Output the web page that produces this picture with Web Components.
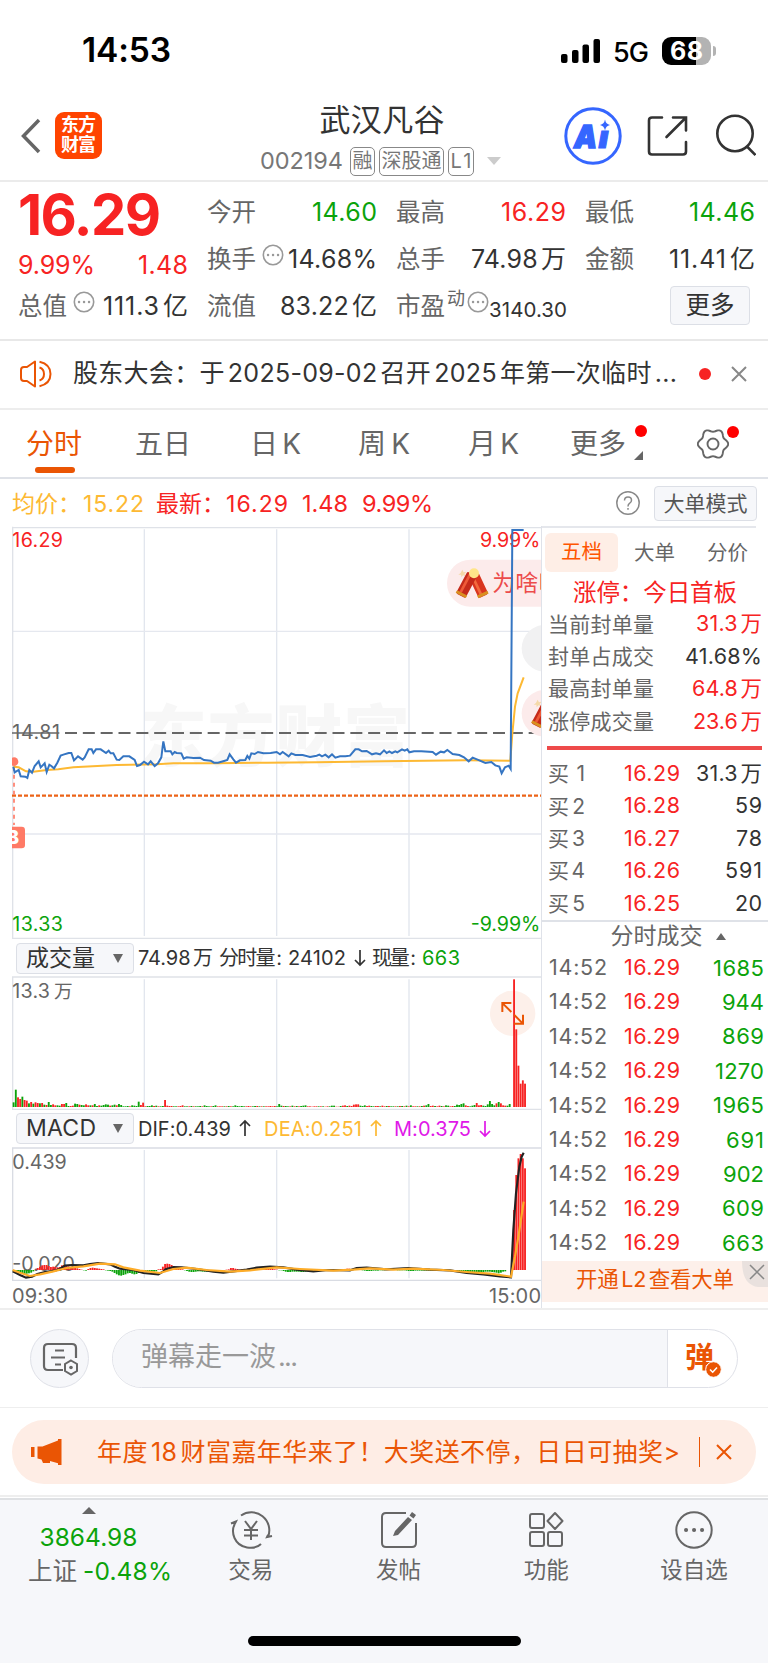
<!DOCTYPE html>
<html lang="zh-CN">
<head>
<meta charset="UTF-8">
<meta name="viewport" content="width=device-width, initial-scale=1.0">
<title>武汉凡谷 002194</title>
<style>
    body {
        margin: 0;
        width: 768px;
        background: #fff;
        color: #333;
        font-family: Inter, "Noto Sans CJK SC", sans-serif;
        text-autospace: normal;
        --red: #f72323;
        --green: #0ba30b;
        --brand: #ea5504;
        --grey: #666;
        --line: #dfe2e8;
        --soft: #f6f7fa;
    }
    .market {
        display: flex;
        height: 782px;
        border-bottom: 2px solid #eee;
    }
</style>
</head>
<body>
    <status-bar></status-bar>
    <stock-header></stock-header>
    <quote-panel></quote-panel>
    <notice-bar><fit-text w="604">股东大会：于2025-09-02召开2025年第一次临时...</fit-text></notice-bar>
    <period-tabs></period-tabs>
    <price-summary></price-summary>
    <main class="market">
        <stock-chart></stock-chart>
        <order-book></order-book>
    </main>
    <comment-bar></comment-bar>
    <promo-banner><fit-text w="583">年度18财富嘉年华来了！大奖送不停，日日可抽奖&gt;</fit-text></promo-banner>
    <bottom-nav></bottom-nav>

<script>
class StatusBar extends HTMLElement {
    constructor() {
        super();
        this.attachShadow({ mode: "open" });
        this.shadowRoot.innerHTML = `
            <style>
                :host {
                    display: flex;
                    align-items: center;
                    box-sizing: border-box;
                    height: 102px;
                    padding: 0 52px 0 82px;
                    color: #000;
                }
                .time { font-size: 33.500px; font-weight: 600; margin-right: auto; }
                .net { font-size: 27px; font-weight: 500; margin: 2px 13px 0 13px; }
                .battery {
                    display: flex;
                    align-items: center;
                    justify-content: center;
                    width: 49px;
                    height: 28px;
                    border-radius: 9px;
                    background: linear-gradient(90deg, #000 34px, #b3b3b3 34px);
                    color: #fff;
                    font-size: 25px;
                    font-weight: 700;
                }
                .nub { width: 3px; height: 10px; margin-left: 2px; border-radius: 0 3px 3px 0; background: #b3b3b3; }
            </style>
            <fit-text class="time" w="89">14:53</fit-text>
            <svg width="39" height="24" viewBox="0 0 39 24">
                <rect x="0" y="15" width="6.500" height="9" rx="2"/>
                <rect x="11" y="11" width="6.500" height="13" rx="2"/>
                <rect x="21.500" y="5.500" width="6.500" height="18.500" rx="2"/>
                <rect x="32.500" y="0" width="6.500" height="24" rx="2"/>
            </svg>
            <fit-text class="net" w="36">5G</fit-text>
            <div class="battery"><fit-text w="33">68</fit-text></div>
            <div class="nub"></div>
        `;
    }
}

class StockHeader extends HTMLElement {
    constructor() {
        super();
        this.attachShadow({ mode: "open" });
        this.shadowRoot.innerHTML = `
            <style>
                :host {
                    display: flex;
                    align-items: center;
                    box-sizing: border-box;
                    height: 80px;
                    padding: 0 12px 0 20px;
                    border-bottom: 2px solid #ebebeb;
                }
                svg { flex: none; margin-top: -10px; }
                .logo {
                    display: flex;
                    flex-direction: column;
                    justify-content: center;
                    align-items: center;
                    gap: 2px;
                    width: 47px;
                    height: 47px;
                    margin: -12px 158px 0 14px;
                    border-radius: 9px;
                    background: #ff4400;
                    color: #fff;
                    font-size: 18px;
                    font-weight: 700;
                }
                .name {
                    display: flex;
                    flex-direction: column;
                    align-items: center;
                    width: 244px;
                    margin: -3px 60px 0 0;
                    font-size: 31px;
                }
                .code {
                    display: flex;
                    align-items: center;
                    width: 100%;
                    margin-top: 12px;
                    color: #777;
                    font-size: 23.500px;
                }
                .tag {
                    display: flex;
                    align-items: center;
                    justify-content: center;
                    box-sizing: border-box;
                    height: 29px;
                    padding: 0 1.500px;
                    margin-left: 4px;
                    border: 1.500px solid #888;
                    border-radius: 5px;
                    font-size: 20px;
                }
                .tag:nth-of-type(1) { margin-left: 7px; }
                .arrow {
                    margin-left: 13px;
                    border: 7px solid transparent;
                    border-top: 8px solid #ccc;
                    border-bottom: 0;
                }
                .share { margin-left: 25px; }
                .search { margin-left: 26px; }
            </style>
            <svg width="21" height="36" viewBox="0 0 21 36" fill="none" stroke="#666" stroke-width="3.500"><path d="M19 2 3.500 18 19 34"/></svg>
            <div class="logo"><fit-text w="35">东方</fit-text><fit-text w="35">财富</fit-text></div>
            <div class="name">
                <fit-text w="125">武汉凡谷</fit-text>
                <div class="code">
                    <fit-text w="83">002194</fit-text>
                    <div class="tag"><fit-text>融</fit-text></div>
                    <div class="tag"><fit-text w="60">深股通</fit-text></div>
                    <div class="tag"><fit-text w="21">L1</fit-text></div>
                    <div class="arrow"></div>
                </div>
            </div>
            <svg width="58" height="58" viewBox="0 0 58 58">
                <circle cx="29" cy="29" r="27.200" fill="#fff" stroke="#3566ff" stroke-width="3"/>
                <text x="10" y="40.500" font-size="32" font-weight="900" font-style="italic" fill="#3566ff" stroke="#3566ff" stroke-width="1.500" textLength="23" lengthAdjust="spacingAndGlyphs">A</text>
                <text x="34.500" y="41" font-size="31" font-weight="900" font-style="italic" fill="#3566ff" stroke="#3566ff" textLength="10" lengthAdjust="spacingAndGlyphs">ı</text>
                <path d="M41 12.500q.8 4.700 5 5.500-4.200.8-5 5.500-.8-4.700-5-5.500 4.200-.8 5-5.500z" fill="#3566ff"/>
            </svg>
            <svg class="share" width="42" height="42" viewBox="0 0 42 42" fill="none" stroke="#333" stroke-width="2.600" stroke-linecap="round">
                <path d="M15 2.500H5Q2 2.500 2 5.500v31q0 3 3 3h31q3 0 3-3V27M26 2.500h13v13M38 3.500 19.500 22"/>
            </svg>
            <svg class="search" width="41" height="44" viewBox="0 0 41 44" fill="none" stroke="#333" stroke-width="2.600">
                <circle cx="20" cy="19.500" r="17.700"/><path d="m31.500 32 9 9"/>
            </svg>
        `;
    }
}

/* Text squeezed or spread with letter-spacing to the width in "w" */
class FitText extends HTMLElement {
    constructor() {
        super();
        this.attachShadow({ mode: "open" });
        this.shadowRoot.innerHTML = `
            <style>
                :host { display: inline-block; flex: none; line-height: 1; white-space: nowrap; }
                span { display: inline-block; }
            </style>
            <span><slot></slot></span>
        `;
    }

    connectedCallback() {
        if (!this.hasAttribute("w")) {
            return;
        }
        const width = Number(this.getAttribute("w"));
        const span = this.shadowRoot.querySelector("span");
        const count = this.textContent.length - 1;
        const spacing = (width - span.getBoundingClientRect().width) / count;
        span.style.letterSpacing = spacing + "px";
        span.style.marginRight = -spacing + "px";
    }
}

const MORE_DOTS = `
    <svg class="dots" width="22" height="22" viewBox="0 0 22 22" fill="none" stroke="#999" stroke-width="1.600">
        <circle cx="11" cy="11" r="9.700"/>
        <path d="M6 11h.1M11 11h.1M16 11h.1" stroke-width="2.400" stroke-linecap="round"/>
    </svg>`;

class QuotePanel extends HTMLElement {
    constructor() {
        super();
        this.attachShadow({ mode: "open" });
        this.shadowRoot.innerHTML = `
            <style>
                :host {
                    display: flex;
                    gap: 19px;
                    box-sizing: border-box;
                    height: 159px;
                    padding: 7px 11px 0 18px;
                    border-bottom: 2px solid #e8e8e8;
                    font-size: 25px;
                }
                .col { width: 170px; }
                .row { display: flex; align-items: center; height: 47px; }
                .row > :last-child { margin-left: auto; }
                .label { color: var(--grey); font-size: 24.500px; }
                .dots { margin: -10px 0 0 6px; flex: none; }
                .big { height: 52px; color: var(--red); font-size: 56px; font-weight: 700; }
                .change { height: 48px; margin-bottom: -6px; color: var(--red); }
                .up { color: var(--red); }
                .down { color: var(--green); }
                .sup { margin: -16px 0 0 2px; color: var(--grey); font-size: 18px; }
                .sup + .dots { margin-left: 2px; }
                .small { font-size: 20.500px; padding-top: 8px; }
                .more {
                    display: flex;
                    align-items: center;
                    justify-content: center;
                    box-sizing: border-box;
                    width: 80px;
                    height: 39px;
                    margin: -3px 5px 0 0;
                    border: 1.500px solid #dcdfe6;
                    border-radius: 4px;
                    background: var(--soft);
                    font-size: 24.500px;
                }
            </style>
            <div class="col">
                <div class="row big"><fit-text w="143" style="margin-left:0">16.29</fit-text></div>
                <div class="row change"><fit-text w="77">9.99%</fit-text><fit-text w="50">1.48</fit-text></div>
                <div class="row"><fit-text class="label">总值</fit-text>${MORE_DOTS}<fit-text w="85">111.3亿</fit-text></div>
            </div>
            <div class="col">
                <div class="row"><fit-text class="label">今开</fit-text><fit-text class="down" w="65">14.60</fit-text></div>
                <div class="row"><fit-text class="label">换手</fit-text>${MORE_DOTS}<fit-text w="89">14.68%</fit-text></div>
                <div class="row"><fit-text class="label">流值</fit-text><fit-text w="97">83.22亿</fit-text></div>
            </div>
            <div class="col">
                <div class="row"><fit-text class="label">最高</fit-text><fit-text class="up" w="65">16.29</fit-text></div>
                <div class="row"><fit-text class="label">总手</fit-text><fit-text w="95">74.98万</fit-text></div>
                <div class="row"><fit-text class="label">市盈</fit-text><fit-text class="sup">动</fit-text>${MORE_DOTS}<fit-text class="small" w="78">3140.30</fit-text></div>
            </div>
            <div class="col">
                <div class="row"><fit-text class="label">最低</fit-text><fit-text class="down" w="66">14.46</fit-text></div>
                <div class="row"><fit-text class="label">金额</fit-text><fit-text w="86">11.41亿</fit-text></div>
                <div class="row"><div class="more"><fit-text>更多</fit-text></div></div>
            </div>
        `;
    }
}

class NoticeBar extends HTMLElement {
    constructor() {
        super();
        this.attachShadow({ mode: "open" });
        this.shadowRoot.innerHTML = `
            <style>
                :host {
                    display: flex;
                    align-items: center;
                    box-sizing: border-box;
                    height: 69px;
                    padding: 0 20px 2px 19px;
                    border-bottom: 2px solid #ededed;
                    font-size: 25px;
                }
                .speaker { margin-right: 20px; }
                .dot { width: 12px; height: 12px; margin: 0 19px 0 auto; border-radius: 50%; background: var(--red); }
            </style>
            <svg class="speaker" width="34" height="30" viewBox="0 0 34 30" fill="none" stroke="#ea5504" stroke-width="2">
                <path d="M16 2.500v25L8 22H5q-3 0-3-3v-8q0-3 3-3h3z" stroke-linejoin="round"/>
                <path d="M20.500 8.500q4.500 1.500 4.500 6.500t-4.500 6.500M20.500 2.800q11 2.500 11 12.200t-11 12.200"/>
            </svg>
            <slot></slot>
            <div class="dot"></div>
            <svg width="18" height="18" viewBox="0 0 18 18" stroke="#888" stroke-width="2"><path d="m2 2 14 14M16 2 2 16"/></svg>
        `;
    }
}

/* Outline of the settings gear: a circle with six soft teeth */
const GEAR = Array.from({ length: 72 }, (_, i) => {
    const angle = i * Math.PI / 36;
    const r = 13.7 + 1.5 * Math.cos(6 * angle);
    return `${(16 + r * Math.cos(angle)).toFixed(2)},${(16 + r * Math.sin(angle)).toFixed(2)}`;
}).join(" ");

class PeriodTabs extends HTMLElement {
    constructor() {
        super();
        this.attachShadow({ mode: "open" });
        this.shadowRoot.innerHTML = `
            <style>
                :host {
                    display: flex;
                    align-items: center;
                    box-sizing: border-box;
                    height: 69px;
                    padding: 0 39px 0 26px;
                    border-bottom: 2px solid var(--line);
                    color: var(--grey);
                    font-size: 28px;
                }
                .tab { position: relative; flex: none; }
                .active { color: var(--brand); }
                .active::after {
                    content: "";
                    position: absolute;
                    left: 9px;
                    bottom: -12px;
                    width: 40px;
                    height: 6px;
                    border-radius: 3px;
                    background: var(--brand);
                }
                .dot {
                    position: absolute;
                    top: -2px;
                    right: -21px;
                    width: 12px;
                    height: 12px;
                    border-radius: 50%;
                    background: #f00;
                }
                .corner {
                    position: absolute;
                    right: -17px;
                    bottom: 1px;
                    border-left: 9px solid transparent;
                    border-bottom: 9px solid var(--grey);
                }
                .gear { position: relative; display: flex; margin-left: auto; }
                .gear .dot { top: -2px; right: -10px; }
            </style>
            <div class="tab active"><fit-text w="56">分时</fit-text></div>
            <div class="tab" style="margin-left:53px"><fit-text w="56">五日</fit-text></div>
            <div class="tab" style="margin-left:59px"><fit-text w="51">日K</fit-text></div>
            <div class="tab" style="margin-left:57px"><fit-text w="52">周K</fit-text></div>
            <div class="tab" style="margin-left:58px"><fit-text w="51">月K</fit-text></div>
            <div class="tab" style="margin-left:51px"><fit-text w="56">更多</fit-text><i class="dot"></i><i class="corner"></i></div>
            <div class="gear">
                <svg width="32" height="32" viewBox="0 0 32 32" fill="none" stroke="#666" stroke-width="1.900">
                    <polygon points="${GEAR}"/>
                    <circle cx="16" cy="16" r="5.500"/>
                </svg>
                <i class="dot"></i>
            </div>
        `;
    }
}

class PriceSummary extends HTMLElement {
    constructor() {
        super();
        this.attachShadow({ mode: "open" });
        this.shadowRoot.innerHTML = `
            <style>
                :host {
                    display: flex;
                    align-items: center;
                    box-sizing: border-box;
                    height: 47px;
                    padding: 3px 12px 0 12px;
                    color: var(--red);
                    font-size: 23px;
                }
                .avg { color: #fdb933; }
                .latest { margin-left: 12px; }
                .n { margin-left: 14px; font-size: 23.500px; }
                .help { margin-left: auto; }
                .mode {
                    display: flex;
                    align-items: center;
                    justify-content: center;
                    box-sizing: border-box;
                    width: 103px;
                    height: 35px;
                    margin: -2px -1px 0 13px;
                    border: 1.500px solid #dcdfe6;
                    border-radius: 4px;
                    background: var(--soft);
                    color: #555;
                    font-size: 21px;
                }
            </style>
            <fit-text class="avg" w="69">均价：</fit-text>
            <fit-text class="avg" w="61" style="margin-left:2px">15.22</fit-text>
            <fit-text class="latest" w="69">最新：</fit-text>
            <fit-text w="62" style="margin-left:1px">16.29</fit-text>
            <fit-text class="n" w="46">1.48</fit-text>
            <fit-text class="n" w="71">9.99%</fit-text>
            <svg class="help" width="26" height="26" viewBox="0 0 26 26" fill="none" stroke="#888" stroke-width="1.500">
                <circle cx="13" cy="12" r="11.200"/>
                <path d="M9.500 9.500q0-3.500 3.500-3.500t3.500 3.200q0 2-2 3.200-1.500 1-1.500 3M13 17v1.800"/>
            </svg>
            <div class="mode"><fit-text>大单模式</fit-text></div>
        `;
    }
}

/* Chart space has three units to a pixel; one minute is 6.585 units */
const STEP = 6.585;
const FIRST = 38;
const LIMIT_UP_MINUTE = 228;
const LAST_MINUTES = 6;

const PRICE = "40,740 44,757 56,750 62,769 76,770 82,774 88,750 96,758 104,738 116,724 122,742 134,730 140,756 148,734 154,738 162,745 172,728 182,707 190,704 206,699 214,699 222,721 234,709 248,719 254,712 266,688 275,688 280,699 288,688 302,688 318,699 326,692 332,700 340,700 350,719 358,720 370,709 388,709 404,720 411,738 420,735 432,725 444,733 452,724 464,738 474,730 484,712 490,664 496,694 512,694 517,703 524,696 530,699 544,700 551,716 560,712 580,714 600,713 612,720 632,722 642,728 654,728 672,723 682,720 689,703 700,718 708,728 720,721 736,720 742,708 748,716 754,700 764,702 774,696 790,700 812,699 830,696 840,703 848,696 866,709 874,700 886,705 908,705 930,711 950,707 958,704 966,709 976,704 986,712 996,703 1006,713 1020,709 1036,709 1050,707 1066,688 1076,688 1086,694 1100,693 1116,703 1128,700 1140,703 1152,691 1160,699 1168,694 1176,699 1186,694 1192,697 1206,688 1214,692 1222,688 1228,697 1242,694 1264,694 1298,696 1308,704 1322,695 1332,697 1342,690 1358,702 1378,705 1392,712 1406,724 1418,713 1438,721 1456,729 1474,726 1486,736 1498,740 1505,760 1515,742 1526,737 1532,747 1537,30 1571,30";
const AVERAGE = "40,740 56,742 78,754 100,755 140,750 175,748 220,742 350,735 470,733 520,730 650,730 800,728 950,727 1150,724 1400,721 1531,722 1537,640 1545,560 1553,520 1571,472";

const VOLUME = "g14 g52 r29 r24 g31 r21 r19 g11 r15 g10 r14 r12 g11 r12 g7 r6 g15 g6 r8 r5 g5 g4 r9 r9 g12 g3 r3 r4 g10 g9 r7 g6 g5 r8 r5 g5 r5 g9 g3 r5 g4 g6 g8 g7 r4 g5 g7 r5 g9 g6 g2 g2 g3 r2 g5 g4 g3 g16 r6 r13 r2 g3 g3 g5 r3 g4 r2 g2 g3 r21 r4 r3 r3 g2 g2 r2 r3 r5 g2 g2 r2 g3 r2 g2 g2 g3 r2 g5 g3 g2 r2 g3 g5 r2 r2 r2 g2 r2 g3 r2 g2 g5 g3 g2 g3 g2 r2 r3 r2 g2 g3 r3 g2 r2 g2 r2 r2 r3 r2 r3 g2 g9 g4 r3 g3 g2 r2 g4 r2 g3 r2 g3 g4 g5 r2 r2 r1 r2 r2 g2 r2 g2 r1 r2 g2 g4 g4 r1 r1 g3 r4 r5 g3 r4 r3 r7 r8 r8 g4 g3 g5 r3 r4 g3 g2 r3 r3 g2 r4 r2 g3 r3 g2 g2 r2 g2 r3 g3 r2 g4 r2 g5 r2 r2 g2 r2 g3 r4 g5 g9 r3 r4 g3 r2 r4 g3 r2 g5 g4 r2 r3 g3 g7 g6 g9 g11 r5 r3 g2 g4 g6 r12 r5 r6 g4 g3 g8 g18 g9 g5 r11 g15 r11 r5 r4 g4 g9 r383 r233 r124 r70 r80 r70";

const MACD = "g2 g3 g5 g9 g11 g12 g11 g10 g8 g4 r1 r6 r10 r14 r15 r15 r12 r9 r10 r9 r8 r9 r14 r15 r14 r11 r7 r8 r6 r5 r3 r1 g1 g2 r3 r6 r7 r6 r5 r4 r3 r2 g1 g2 g3 g5 g9 g13 g16 g17 g15 g13 g10 g9 g11 g13 g12 g9 g8 g5 g4 g6 g6 g5 g5 g4 r2 r3 r10 r18 r19 r18 r15 r12 r9 r6 r4 r2 g1 g3 g5 g6 g6 g5 g4 g4 g5 g5 g5 g5 g5 g5 g5 g4 g3 g2 g1 r1 r2 r6 r6 r4 r3 r1 r2 r2 r3 r4 r5 r5 r6 r6 r6 r5 r5 r4 r4 r3 r3 r2 r1 g1 g1 g3 g5 g6 g6 g5 g5 g5 g5 g6 g6 g5 g4 g3 g2 g1 g1 g1 g1 g2 g2 g2 g2 g1 g1 g1 g1 g1 r1 r2 r4 r4 r3 r3 r2 r1 r1 g1 g2 g3 g3 g3 g2 g2 g2 g1 g1 g1 r1 r1 r1 r1 r1 g1 g1 g1 g1 g2 g3 g3 g3 g2 g2 g2 g2 g2 g2 g2 g2 g2 g2 g2 g1 g1 g1 g2 g2 g3 g3 g3 g4 g4 g5 g6 g6 g7 g7 g7 g7 g7 g7 g6 g6 g5 g5 g5 g6 g7 g8 g10 g8 g5 g4 r180 r285 r335 r348 r335 r305";
const DIF = "38,1024 50,1030 60,1035 78,1043 96,1040 112,1032 135,1026 165,1022 180,1016 195,1007 215,1005 250,1006 270,1002 295,999 330,1003 345,1010 360,1016 400,1020 430,1029 475,1033 490,1024 497,1018 520,1011 545,1012 590,1017 640,1025 670,1028 700,1024 740,1019 770,1013 810,1010 850,1012 890,1019 940,1024 985,1020 1050,1021 1070,1014 1100,1013 1160,1018 1225,1014 1290,1019 1350,1021 1400,1029 1450,1033 1500,1039 1533,1042 1540,900 1548,790 1558,710 1565,680 1571,668";
const DEA = "38,1020 60,1028 90,1038 120,1033 160,1024 200,1014 250,1009 300,1001 345,1003 370,1012 420,1022 480,1029 520,1017 560,1013 620,1020 690,1025 750,1021 830,1012 900,1017 1000,1022 1060,1019 1110,1015 1180,1019 1240,1016 1330,1020 1400,1026 1470,1031 1533,1040 1545,980 1556,915 1565,855 1571,815";

function bars(list, base, bothWays) {
    const all = list.split(" ");
    const day = all.slice(0, -LAST_MINUTES).slice(0, LIMIT_UP_MINUTE);
    const end = all.slice(-LAST_MINUTES);

    const bar = (item, minute) => {
        const height = Number(item.slice(1));
        const down = item[0] === "g";
        const y = bothWays && down ? base : base - height;
        return `<rect x="${(FIRST + minute * STEP).toFixed(1)}" y="${y}" width="5.600" height="${height}" fill="${down ? "#0ba30b" : "#f72323"}"/>`;
    };
    return day.map(bar).join("") + end.map((item, i) => bar(item, LIMIT_UP_MINUTE + i)).join("");
}

function grid(top, bottom) {
    return `<path d="M433 ${top}V${bottom}M830 ${top}V${bottom}M1227 ${top}V${bottom}" stroke="#e2e6ee" stroke-width="4"/>`;
}

const FIRECRACKER = `
    <path d="M0-28 5-18 16-20 8-11 14-2 3-6-4 2-5-8-16-8-7-15z" transform="translate(-30 -22) scale(.75)" fill="#f4d9a8"/>
    <g transform="rotate(-25 14 8)"><rect x="4" y="-30" width="32" height="72" rx="6" fill="#d9341e"/><rect x="11" y="-26" width="8" height="60" fill="#f26a3e"/><rect x="3" y="32" width="34" height="9" fill="#d99020"/></g>
    <g transform="rotate(28 -14 8)"><rect x="-36" y="-32" width="32" height="74" rx="6" fill="#c52a1a"/><rect x="-29" y="-28" width="8" height="60" fill="#ee5a38"/><rect x="-37" y="32" width="34" height="9" fill="#d99020"/></g>
    <circle cx="5" cy="-32" r="15" fill="#ffe58a"/>`;

class StockChart extends HTMLElement {
    constructor() {
        super();
        this.attachShadow({ mode: "open" });
        this.shadowRoot.innerHTML = `
            <style>
                :host { display: flex; flex-direction: column; width: 530px; margin-left: 12px; border-right: 1px solid #dfe2e9; box-sizing: border-box; }
                svg { display: block; flex: none; overflow: hidden; }
                text { font-size: 59px; }
                .bar { display: flex; align-items: center; flex: none; height: 36px; font-size: 20px; padding-bottom: 0; box-sizing: border-box; }
                .macd { height: 37px; }
                .select {
                    display: flex;
                    align-items: center;
                    justify-content: space-between;
                    box-sizing: border-box;
                    width: 118px;
                    height: 31px;
                    padding: 0 10px 0 9px;
                    margin: 0 4px 0 4px;
                    border: 1.500px solid #dcdfe6;
                    border-radius: 4px;
                    background: var(--soft);
                    font-size: 23px;
                }
                .select i { border: 5px solid transparent; border-top: 9px solid #666; border-bottom: 0; }
                .a { margin-left: 6px; }
                .times { display: flex; align-items: center; justify-content: space-between; height: 27px; padding-top: 2px; box-sizing: border-box; color: var(--grey); font-size: 20px; }
            </style>
            <svg width="529" height="414" viewBox="36 18 1587 1242">
                <text x="420" y="724" font-weight="900" fill="#f7f7f7" textLength="810" style="font-size:200px">东方财富</text>
                ${grid(28, 1248)}
                <path d="M36 334H1623M36 942H1623" stroke="#e5e8ef" stroke-width="4"/>
                <path d="M36 23H1623M38 20V1256M36 1255H1623" stroke="#dfe2e8" stroke-width="4" fill="none"/>
                <g fill="none">
                    <path d="M195 639H1614" stroke="#666" stroke-width="6" stroke-dasharray="36 17.500"/>
                    <path d="M36 639H178" stroke="#666" stroke-width="5"/>
                    <path d="M36 827H1623" stroke="#ec6317" stroke-width="7" stroke-dasharray="12 6"/>
                </g>
                <text x="37" y="81" fill="#f72323" textLength="152">16.29</text>
                <text x="37" y="658" fill="#666" textLength="143">14.81</text>
                <text x="37" y="1232" fill="#0ba30b" textLength="152">13.33</text>
                <text x="1412" y="1232" fill="#0ba30b" textLength="209">-9.99%</text>
                <path d="M42 740V915" stroke="#ff7a66" stroke-width="5" stroke-dasharray="12 12"/>
                <circle cx="42" cy="725" r="13" fill="#ff7a66"/>
                <rect x="10" y="920" width="65" height="65" rx="10" fill="#ff7a66"/>
                <text x="19" y="973" fill="#fff" font-weight="800" style="font-size:58px">B</text>
                <rect x="1341" y="119" width="400" height="141" rx="70" fill="#fcebeb"/>
                <g transform="translate(1417 192)">${FIRECRACKER}</g>
                <text x="1477" y="214" fill="#ec4b4b" style="font-size:69px">为啥叫</text>
                <circle cx="1635" cy="385" r="70" fill="#f1f1f2"/>
                <circle cx="1635" cy="580" r="70" fill="#fcebeb"/>
                <g transform="translate(1643 582)">${FIRECRACKER}</g>
                <text x="1440" y="81" fill="#f72323" textLength="181">9.99%</text>
                <polyline points="${AVERAGE}" fill="none" stroke="#fdb933" stroke-width="6"/>
                <polyline points="${PRICE}" fill="none" stroke="#3575c2" stroke-width="6"/>
            </svg>
            <div class="bar">
                <div class="select"><fit-text w="69">成交量</fit-text><i></i></div>
                <fit-text w="75">74.98万</fit-text>
                <fit-text class="a" w="63">分时量:</fit-text>
                <fit-text class="a" w="58">24102</fit-text>
                <svg width="26" height="20" viewBox="-8 0 26 20" fill="none" stroke="#333" stroke-width="1.700"><path d="M6 2v15M1 12l5 5 5-5"/></svg>
                <fit-text w="44">现量:</fit-text>
                <fit-text class="a" w="38" style="color:var(--green)">663</fit-text>
            </div>
            <svg width="529" height="134" viewBox="36 138 1587 402">
                ${grid(148, 532)}
                <path d="M36 141H1623M38 141V538M36 538H1623" stroke="#dfe2e8" stroke-width="4" fill="none"/>
                <text x="37" y="205" fill="#666" textLength="113">13.3</text>
                <text x="162" y="205" fill="#666" style="font-size:56px">万</text>
                <circle cx="1538" cy="250" r="68" fill="#fdf0ea"/>
                ${bars(VOLUME, 531, false)}
                <path d="M1534 246 1508 220M1507 246V219H1534M1542 254 1568 280M1542 281H1569V254" stroke="#ea5504" stroke-width="6" fill="none"/>
            </svg>
            <div class="bar macd">
                <div class="select"><fit-text w="70">MACD</fit-text><i></i></div>
                <fit-text w="93">DIF:0.439</fit-text>
                <svg width="33" height="20" viewBox="-8 0 33 20" fill="none" stroke="#333" stroke-width="1.700"><path d="M6 17V2M1 7l5-5 5 5"/></svg>
                <fit-text w="98" style="color:#fdb933">DEA:0.251</fit-text>
                <svg width="32" height="20" viewBox="-8 0 32 20" fill="none" stroke="#fdb933" stroke-width="1.700"><path d="M6 17V2M1 7l5-5 5 5"/></svg>
                <fit-text w="77" style="color:#e019e8">M:0.375</fit-text>
                <svg width="28" height="20" viewBox="-8 0 28 20" fill="none" stroke="#e019e8" stroke-width="1.700"><path d="M6 2v15M1 12l5 5 5-5"/></svg>
            </div>
            <svg width="529" height="135" viewBox="36 651 1587 405">
                ${grid(660, 1045)}
                <path d="M36 654H1623M38 654V1050M36 1051H1623" stroke="#d9dce3" stroke-width="4" fill="none"/>
                <text x="37" y="717" fill="#666" textLength="163">0.439</text>
                <text x="37" y="1024" fill="#666" textLength="188">-0.020</text>
                ${bars(MACD, 1020, true)}
                <polyline points="${DIF}" fill="none" stroke="#222" stroke-width="6.500"/>
                <polyline points="${DEA}" fill="none" stroke="#fdac28" stroke-width="6.500"/>
            </svg>
            <div class="times"><fit-text w="56">09:30</fit-text><fit-text w="52">15:00</fit-text></div>
        `;
    }
}

class OrderBook extends HTMLElement {
    constructor() {
        super();
        this.attachShadow({ mode: "open" });

        const stats = [
            ["当前封单量", "31.3万", 66, "red"],
            ["封单占成交", "41.68%", 77, "dark"],
            ["最高封单量", "64.8万", 70, "red"],
            ["涨停成交量", "23.6万", 69, "red"]
        ];
        const bids = [
            ["买1", "16.29", "31.3万", 66],
            ["买2", "16.28", "59", 27],
            ["买3", "16.27", "78", 26],
            ["买4", "16.26", "591", 37],
            ["买5", "16.25", "20", 27]
        ];
        const trades = [
            [1685, 51],
            [944, 42],
            [869, 42],
            [1270, 49],
            [1965, 51],
            [691, 38],
            [902, 41],
            [609, 42],
            [663, 42]
        ];

        this.shadowRoot.innerHTML = `
            <style>
                :host { display: block; width: 226px; font-size: 21.500px; box-sizing: border-box; }
                .tabs { display: flex; align-items: center; height: 51px; color: var(--grey); font-size: 20.500px; border-top: 2px solid #e5e7ec; width: 214px; box-sizing: border-box; }
                .tabs div { flex: none; margin-left: 32px; }
                .tabs .on {
                    width: 73px;
                    height: 39px;
                    line-height: 37px;
                    margin: 0 -16px 0 3px;
                    border-radius: 6px;
                    background: #feeee6;
                    color: #ff5500;
                    text-align: center;
                }
                .limit { display: flex; justify-content: center; height: 31px; align-items: center; color: var(--red); font-size: 23.500px; }
                .row { display: flex; align-items: center; height: 32.400px; padding: 0 6px 0 6px; }
                .row > :first-child { color: var(--grey); font-size: 21px; }
                .row > :last-child { margin-left: auto; }
                .red { color: var(--red); }
                .rule { height: 4px; margin: 8px 6px 8px 5px; background: #ee4a4a; }
                .price { width: 56px; margin-left: 39px; color: var(--red); }
                .head { display: flex; justify-content: center; align-items: center; height: 29px; padding-left: 26px; border-top: 2px solid var(--line); color: var(--grey); font-size: 23px; }
                .head i { margin-left: 13px; border: 5px solid transparent; border-bottom: 7px solid #666; border-top: 0; }
                .trade { height: 34.400px; padding: 0 4px 0 7px; }
                .trade > :first-child { font-size: 21.500px; }
                .trade .price { margin-left: 17px; }
                .trade > :last-child { color: var(--green); font-size: 22px; }
                .l2 {
                    display: flex;
                    align-items: center;
                    justify-content: center;
                    position: relative;
                    height: 41px;
                    margin-top: 1px;
                    padding: 0 0 4px 0;
                    box-sizing: border-box;
                    background: #fdf0ea;
                    color: var(--brand);
                    font-size: 21.500px;
                }
                .l2 svg { position: absolute; top: 0; right: 0; }
            </style>
            <div class="tabs"><div class="on"><fit-text>五档</fit-text></div><div><fit-text>大单</fit-text></div><div><fit-text>分价</fit-text></div></div>
            <div class="limit"><fit-text w="164">涨停：今日首板</fit-text></div>
            ${stats.map(([name, value, w, tone]) => `
                <div class="row"><fit-text w="106">${name}</fit-text><fit-text class="${tone}" w="${w}">${value}</fit-text></div>`).join("")}
            <div class="rule"></div>
            ${bids.map(([name, price, amount, w]) => `
                <div class="row"><fit-text w="37">${name}</fit-text><fit-text class="price" w="56">${price}</fit-text><fit-text w="${w}">${amount}</fit-text></div>`).join("")}
            <div class="head"><fit-text w="92">分时成交</fit-text><i></i></div>
            ${trades.map(([amount, w]) => `
                <div class="row trade"><fit-text w="58">14:52</fit-text><fit-text class="price" w="56">16.29</fit-text><fit-text w="${w}">${amount}</fit-text></div>`).join("")}
            <div class="l2"><fit-text w="158">开通L2查看大单</fit-text>
                <svg width="26" height="26" viewBox="0 0 26 26"><path d="M0 0H26V26H16Q0 24 0 0z" fill="#e9e1de"/><path d="m8 4 14 14M22 4 8 18" stroke="#888" stroke-width="1.500"/></svg>
            </div>
        `;
    }
}

class CommentBar extends HTMLElement {
    constructor() {
        super();
        this.attachShadow({ mode: "open" });
        this.shadowRoot.innerHTML = `
            <style>
                :host {
                    display: flex;
                    align-items: center;
                    box-sizing: border-box;
                    height: 98px;
                    padding: 0 30px 0 30px;
                    border-bottom: 1.500px solid #eee;
                }
                .round {
                    display: flex;
                    align-items: center;
                    justify-content: center;
                    box-sizing: border-box;
                    width: 59px;
                    height: 59px;
                    margin-right: 23px;
                    border: 1.500px solid #dfe1e8;
                    border-radius: 50%;
                    background: var(--soft);
                }
                .field {
                    display: flex;
                    flex: 1;
                    box-sizing: border-box;
                    height: 59px;
                    border: 1.500px solid #dfe1e8;
                    border-radius: 30px;
                    overflow: hidden;
                }
                .input { flex: 1; padding: 13px 0 0 28px; background: var(--soft); border-right: 1.500px solid #dfe1e8; color: #999; font-size: 27px; line-height: 1; }
                .dots { margin-left: 2px; }
                .send { display: flex; align-items: center; width: 52px; padding: 0 0 2px 17px; color: var(--brand); font-size: 29px; font-weight: 700; }
                .send svg { margin: 24px 0 0 -9px; }
            </style>
            <div class="round">
                <svg width="36" height="34" viewBox="0 0 36 34" fill="none" stroke="#666" stroke-width="2.200">
                    <path d="M34 16V6q0-4-4-4H6Q2 2 2 6v18q0 4 4 4h15"/>
                    <path d="M13 8.500h9M9 15.500h14M13 22.500h6"/>
                    <path d="m29 19 6 3.500v7L29 33l-6-3.500v-7z" stroke-width="2" transform="translate(0 -.5)"/>
                    <circle cx="29" cy="25.500" r="1.800" fill="#666" stroke="none"/>
                </svg>
            </div>
            <div class="field">
                <div class="input"><fit-text>弹幕走一波</fit-text><fit-text class="dots" w="20">...</fit-text></div>
                <div class="send"><fit-text>弹</fit-text>
                    <svg width="17" height="17" viewBox="0 0 17 17"><circle cx="8.500" cy="8.500" r="7.800" fill="#ea5504" stroke="#fff"/><path d="m5 8.500 2.700 2.700 4.300-4.700" fill="none" stroke="#fff" stroke-width="1.600"/></svg>
                </div>
            </div>
        `;
    }
}

class PromoBanner extends HTMLElement {
    constructor() {
        super();
        this.attachShadow({ mode: "open" });
        this.shadowRoot.innerHTML = `
            <style>
                :host { display: block; box-sizing: border-box; height: 92px; padding: 12px 12px 0 12px; border-bottom: 2px solid #dfe1e4; }
                .pill {
                    display: flex;
                    align-items: center;
                    box-sizing: border-box;
                    height: 64px;
                    padding: 0 23px 0 19px;
                    border-radius: 32px;
                    background: #feede5;
                    color: var(--brand);
                    font-size: 25px;
                }
                .horn { margin-right: 34px; }
                .bar { width: 1.500px; height: 30px; margin: 0 15px 0 auto; background: var(--brand); }
                .edge { height: 2px; margin: 11px -12px 0; background: #eee; }
            </style>
            <div class="pill">
                <svg class="horn" width="32" height="28" viewBox="0 0 32 28" fill="#ea5504">
                    <path d="M0 9h3.500v10H0zM6.500 8.500h5L27 2.500V1h3.500v26H27v-1.700l-8-2.300v2h-7l-1.500-3.500-4-1z"/>
                </svg>
                <slot></slot>
                <div class="bar"></div>
                <svg width="18" height="18" viewBox="0 0 18 18" stroke="#ea5504" stroke-width="2"><path d="m2 2 14 14M16 2 2 16"/></svg>
            </div>
            <div class="edge"></div>
        `;
    }
}

class NavItem extends HTMLElement {
    constructor() {
        super();
        this.attachShadow({ mode: "open" });
        this.shadowRoot.innerHTML = `
            <style>
                :host {
                    display: flex;
                    flex-direction: column;
                    align-items: center;
                    gap: 9px;
                    flex: 1;
                    color: var(--grey);
                    font-size: 22.500px;
                }
            </style>
            <slot name="icon"></slot>
            <slot></slot>
        `;
    }
}

class BottomNav extends HTMLElement {
    constructor() {
        super();
        this.attachShadow({ mode: "open" });
        this.shadowRoot.innerHTML = `
            <style>
                :host {
                    display: flex;
                    flex-direction: column;
                    justify-content: space-between;
                    box-sizing: border-box;
                    height: 164px;
                    padding: 0 0 18px 0;
                    background: var(--soft);
                }
                .items { display: flex; padding-top: 10px; }
                .index {
                    display: flex;
                    flex-direction: column;
                    align-items: center;
                    width: 177px;
                    margin-top: -3px;
                    color: var(--green);
                    font-size: 24.500px;
                }
                .index i { border: 7px solid transparent; border-bottom: 7px solid #666; border-top: 0; margin-bottom: 11px; }
                .last { display: flex; gap: 6px; margin: 9px 0 0 23px; }
                .last :first-child { color: var(--grey); font-size: 24.500px; }
                .home { width: 273px; height: 10px; margin: 0 auto; border-radius: 5px; background: #000; }
            </style>
            <div class="items">
                <div class="index">
                    <i></i>
                    <fit-text w="98">3864.98</fit-text>
                    <div class="last"><fit-text>上证</fit-text><fit-text w="89">-0.48%</fit-text></div>
                </div>
                <nav-item>
                    <svg slot="icon" width="44" height="40" viewBox="0 0 44 40" fill="none" stroke="#666" stroke-width="2">
                        <path d="M12 5.500A18 18 0 0 1 39 27M2 13.500l5-2-.5 1Q2 20 5.500 28T18 37.500 32 34M43 26l-5 1 1-2"/>
                        <path d="m16 11 6 8 6-8M22 19v11M15 20h14M15 25.500h14"/>
                    </svg>
                    <fit-text>交易</fit-text>
                </nav-item>
                <nav-item>
                    <svg slot="icon" width="38" height="40" viewBox="0 0 38 40" fill="none" stroke="#666" stroke-width="2">
                        <path d="M26 3H6Q2 3 2 7v26q0 4 4 4h26q4 0 4-4V13"/>
                        <path d="m32 2 4 3-2.500 3.500-4-3zM28 7l4 3-14 15-5 1 2-5z" fill="#666" stroke="none"/>
                    </svg>
                    <fit-text>发帖</fit-text>
                </nav-item>
                <nav-item>
                    <svg slot="icon" width="36" height="40" viewBox="0 0 36 40" fill="none" stroke="#666" stroke-width="2">
                        <rect x="2" y="4" width="14" height="14" rx="2"/>
                        <path d="m27 3 7.500 8L27 19l-7.500-8z" stroke-linejoin="round"/>
                        <rect x="2" y="22" width="14" height="14" rx="2"/>
                        <rect x="20" y="22" width="14" height="14" rx="2"/>
                    </svg>
                    <fit-text>功能</fit-text>
                </nav-item>
                <nav-item>
                    <svg slot="icon" width="40" height="40" viewBox="0 0 40 40" fill="none" stroke="#666" stroke-width="2">
                        <circle cx="20" cy="20" r="17.700"/>
                        <path d="M12 20h.1M20 20h.1M28 20h.1" stroke-width="4" stroke-linecap="round"/>
                    </svg>
                    <fit-text>设自选</fit-text>
                </nav-item>
            </div>
            <div class="home"></div>
        `;
    }
}

customElements.define("status-bar", StatusBar);
customElements.define("stock-header", StockHeader);
customElements.define("quote-panel", QuotePanel);
customElements.define("notice-bar", NoticeBar);
customElements.define("period-tabs", PeriodTabs);
customElements.define("price-summary", PriceSummary);
customElements.define("stock-chart", StockChart);
customElements.define("order-book", OrderBook);
customElements.define("comment-bar", CommentBar);
customElements.define("promo-banner", PromoBanner);
customElements.define("nav-item", NavItem);
customElements.define("bottom-nav", BottomNav);
// last, so that the texts are measured with their final styles
customElements.define("fit-text", FitText);
</script>
</body>
</html>
